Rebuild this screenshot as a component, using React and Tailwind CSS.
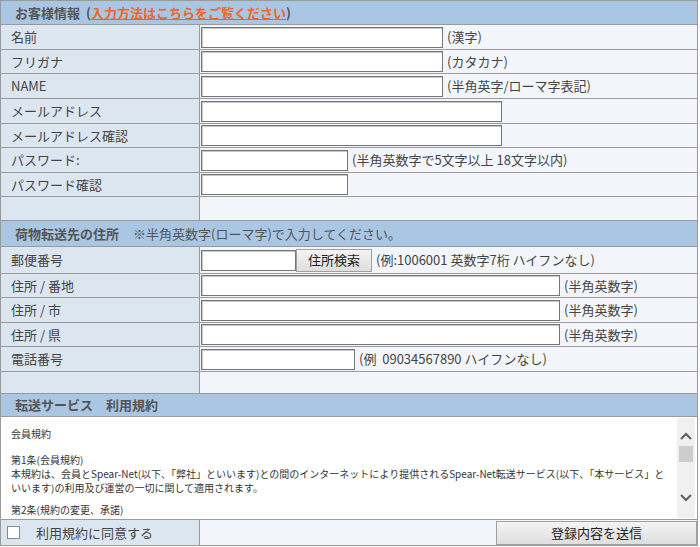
import React from 'react';

const font = { fontFamily: '"Noto Sans CJK JP", "Noto Sans", sans-serif' };

function Header({ h, children }) {
  return (
    <div className={`${h} flex items-center border-b border-[#9a9a9a] bg-[#a9c6e3] pl-[14px] text-[13px] text-[#555]`}>
      {children}
    </div>
  );
}

function Row({ h, label, children }) {
  return (
    <div className={`${h} flex border-b border-[#9a9a9a]`}>
      <div className="flex w-[199px] shrink-0 items-center border-r border-[#9a9a9a] bg-[#dce6f1] pl-[10px] text-[13px] text-[#444]">
        {label}
      </div>
      <div className="flex flex-1 items-center gap-[4px] bg-[#f2f6fb] pl-[1px] text-[13px] text-[#444]">
        {children}
      </div>
    </div>
  );
}

function Input({ w }) {
  return <div className={`${w} h-[21px] border border-[#767676] bg-white shadow-[inset_1px_1px_0_#c8c8c8]`} />;
}

export default function App() {
  return (
    <div className="h-[547px] w-[700px] bg-white" style={font}>
      <div className="w-[698px] border-x border-t border-[#9a9a9a]">
        <Header h="h-[24px]">
          <span className="font-bold">お客様情報</span>
          <span className="ml-[6px] font-bold">(</span>
          <span className="font-bold text-[#f26522] underline">入力方法はこちらをご覧ください</span>
          <span className="font-bold">)</span>
        </Header>
        <Row h="h-[25px]" label="名前">
          <Input w="w-[242px]" />
          <span>(漢字)</span>
        </Row>
        <Row h="h-[24px]" label="フリガナ">
          <Input w="w-[242px]" />
          <span>(カタカナ)</span>
        </Row>
        <Row h="h-[25px]" label="NAME">
          <Input w="w-[242px]" />
          <span>(半角英字/ローマ字表記)</span>
        </Row>
        <Row h="h-[25px]" label="メールアドレス">
          <Input w="w-[301px]" />
        </Row>
        <Row h="h-[24px]" label="メールアドレス確認">
          <Input w="w-[301px]" />
        </Row>
        <Row h="h-[25px]" label="パスワード:">
          <Input w="w-[147px]" />
          <span>(半角英数字で5文字以上 18文字以内)</span>
        </Row>
        <Row h="h-[24px]" label="パスワード確認">
          <Input w="w-[147px]" />
        </Row>
        <Row h="h-[24px]" label="" />
        <Header h="h-[26px]">
          <span className="font-bold">荷物転送先の住所</span>
          <span className="ml-[14px]">※半角英数字(ローマ字)で入力してください。</span>
        </Header>
        <Row h="h-[27px]" label="郵便番号">
          <div className="flex items-center">
            <Input w="w-[95px]" />
            <div className="flex h-[23px] w-[76px] items-center justify-center border border-[#a0a0a0] bg-gradient-to-b from-[#f4f4f4] to-[#dedede] text-[13px] text-[#222]">
              住所検索
            </div>
          </div>
          <span>(例:1006001 英数字7桁 ハイフンなし)</span>
        </Row>
        <Row h="h-[24px]" label="住所 / 番地">
          <Input w="w-[359px]" />
          <span>(半角英数字)</span>
        </Row>
        <Row h="h-[25px]" label="住所 / 市">
          <Input w="w-[359px]" />
          <span>(半角英数字)</span>
        </Row>
        <Row h="h-[24px]" label="住所 / 県">
          <Input w="w-[359px]" />
          <span>(半角英数字)</span>
        </Row>
        <Row h="h-[25px]" label="電話番号">
          <Input w="w-[154px]" />
          <span>(例&nbsp;&nbsp;09034567890 ハイフンなし)</span>
        </Row>
        <Row h="h-[22px]" label="" />
        <Header h="h-[23px]">
          <span className="font-bold">転送サービス　利用規約</span>
        </Header>
        <div className="flex h-[103px] border-b border-[#9a9a9a] bg-white">
          <div className="flex-1 overflow-hidden pl-[10px] pt-[10px] text-[10px] leading-[14px] text-[#333]">
            <div>会員規約</div>
            <div className="mt-[12px]">第1条(会員規約)</div>
            <div className="whitespace-nowrap">本規約は、会員とSpear-Net(以下、「弊社」といいます)との間のインターネットにより提供されるSpear-Net転送サービス(以下、「本サービス」と</div>
            <div className="whitespace-nowrap">いいます)の利用及び運営の一切に関して適用されます。</div>
            <div className="mt-[8px]">第2条(規約の変更、承諾)</div>
          </div>
          <div className="my-[1px] mr-[2px] flex w-[18px] flex-col items-center bg-[#f0f0f0] pt-[14px]">
            <svg width="12" height="8" viewBox="0 0 12 8" fill="none" stroke="#606060" strokeWidth="2">
              <path d="M1 7 L6 2 L11 7" />
            </svg>
            <div className="mt-[6px] h-[16px] w-[14px] bg-[#cdcdcd]" />
            <div className="flex-1" />
            <svg className="mb-[16px]" width="12" height="8" viewBox="0 0 12 8" fill="none" stroke="#606060" strokeWidth="2">
              <path d="M1 1 L6 6 L11 1" />
            </svg>
          </div>
        </div>
        <div className="flex h-[26px] border-b border-[#9a9a9a]">
          <div className="flex w-[199px] shrink-0 items-center border-r border-[#9a9a9a] bg-[#dce6f1] pl-[6px] text-[13px] text-[#444]">
            <div className="h-[13px] w-[13px] border border-[#8a8a8a] bg-white" />
            <span className="ml-[16px]">利用規約に同意する</span>
          </div>
          <div className="flex flex-1 items-center justify-end bg-[#f2f6fb]">
            <div className="flex h-[24px] w-[201px] items-center justify-center border border-[#a0a0a0] bg-gradient-to-b from-[#f4f4f4] to-[#dedede] text-[13px] text-[#222]">
              登録内容を送信
            </div>
          </div>
        </div>
      </div>
    </div>
  );
}
